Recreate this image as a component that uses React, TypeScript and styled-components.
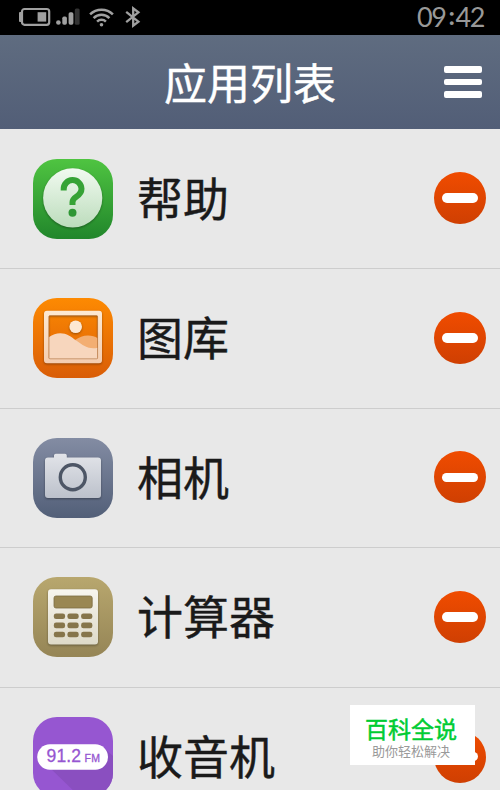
import React from 'react';
import styled, { createGlobalStyle } from 'styled-components';

const HelpIcon = () => (
  <AppIcon viewBox="0 0 80 80">
    <defs>
      <linearGradient id="helpBg" x1="0" y1="0" x2="0" y2="1">
        <stop offset="0" stopColor="#4fc441" />
        <stop offset="1" stopColor="#21862b" />
      </linearGradient>
      <linearGradient id="helpDisc" x1="0" y1="0" x2="0" y2="1">
        <stop offset="0" stopColor="#f1faf0" />
        <stop offset="1" stopColor="#bcdcbc" />
      </linearGradient>
    </defs>
    <rect width="80" height="80" rx="24" fill="url(#helpBg)" />
    <Raised>
      <circle cx="39.7" cy="38.9" r="29.6" fill="url(#helpDisc)" />
    </Raised>
    <path
      d="M30.7 31.6v-1.4a8.9 8.9 0 0 1 17.8-.4c0 4-2.2 6-5.2 7.9-2.8 1.8-3.8 2.8-3.8 5.500v2.900"
      fill="none"
      stroke="#36a336"
      strokeWidth="6"
    />
    <circle cx="39.5" cy="53.7" r="4" fill="#2f9735" />
  </AppIcon>
);

const GalleryIcon = () => (
  <AppIcon viewBox="0 0 80 80">
    <defs>
      <linearGradient id="galleryBg" x1="0" y1="0" x2="0" y2="1">
        <stop offset="0" stopColor="#fd8a02" />
        <stop offset="1" stopColor="#d95d07" />
      </linearGradient>
      <linearGradient id="galleryFrame" x1="0" y1="0" x2="0" y2="1">
        <stop offset="0" stopColor="#fde9d2" />
        <stop offset="1" stopColor="#f4cdb0" />
      </linearGradient>
    </defs>
    <rect width="80" height="80" rx="24" fill="url(#galleryBg)" />
    <Raised>
      <path
        d="M14 12.8h52a3 3 0 0 1 3 3v46.4a3 3 0 0 1-3 3H14a3 3 0 0 1-3-3V15.8a3 3 0 0 1 3-3zM16.7 17.5a1 1 0 0 0-1 1v41.5a1 1 0 0 0 1 1h47a1 1 0 0 0 1-1V18.5a1 1 0 0 0-1-1z"
        fill="url(#galleryFrame)"
        fillRule="evenodd"
      />
    </Raised>
    <Raised>
      <circle cx="42.7" cy="28.7" r="6.3" fill="#fde8d3" />
    </Raised>
    <path
      d="M42 42c4-2.500 8-4.500 13-4.500 4 0 7 1 9.700 2.700V51H50z"
      fill="#f3ae72"
    />
    <path
      d="M15.7 39.2c4-2.800 7.500-4 11.500-4 6.500 0 11 3.500 16 7.300 6 4.500 11 7.700 17 7.700 1.700 0 3-.1 4.500-.5V61h-49z"
      fill="#f7d6bd"
    />
    <rect
      x="16"
      y="17.8"
      width="48.6"
      height="43"
      rx="1"
      fill="none"
      stroke="#a96a37"
      strokeOpacity="0.65"
      strokeWidth="0.9"
    />
  </AppIcon>
);

const CameraIcon = () => (
  <AppIcon viewBox="0 0 80 80">
    <defs>
      <linearGradient id="cameraBg" x1="0" y1="0" x2="0" y2="1">
        <stop offset="0" stopColor="#838ca3" />
        <stop offset="1" stopColor="#525f78" />
      </linearGradient>
      <linearGradient id="cameraBody" x1="0" y1="0" x2="0" y2="1">
        <stop offset="0" stopColor="#e2e4e9" />
        <stop offset="1" stopColor="#bcc1cb" />
      </linearGradient>
    </defs>
    <rect width="80" height="80" rx="24" fill="url(#cameraBg)" />
    <Raised>
      <path
        d="M15 19.5h6v-2a1.800 1.800 0 0 1 1.800-1.800h9.200a1.800 1.800 0 0 1 1.800 1.800v2H65a3 3 0 0 1 3 3v34.500a3 3 0 0 1-3 3H15a3 3 0 0 1-3-3V22.500a3 3 0 0 1 3-3z"
        fill="url(#cameraBody)"
      />
    </Raised>
    <circle
      cx="39.8"
      cy="39.2"
      r="12.5"
      fill="none"
      stroke="#4d5666"
      strokeWidth="3.4"
    />
  </AppIcon>
);

const CalculatorIcon = () => (
  <AppIcon viewBox="0 0 80 80">
    <defs>
      <linearGradient id="calcBg" x1="0" y1="0" x2="0" y2="1">
        <stop offset="0" stopColor="#b8a76e" />
        <stop offset="1" stopColor="#958556" />
      </linearGradient>
      <linearGradient id="calcBody" x1="0" y1="0" x2="0" y2="1">
        <stop offset="0" stopColor="#f7f5ee" />
        <stop offset="1" stopColor="#dedac8" />
      </linearGradient>
    </defs>
    <rect width="80" height="80" rx="24" fill="url(#calcBg)" />
    <Raised>
      <rect x="15" y="12.3" width="50" height="55.2" rx="3" fill="url(#calcBody)" />
    </Raised>
    <rect
      x="21"
      y="19"
      width="38.2"
      height="12"
      rx="2"
      fill="#9a8752"
      stroke="#7c6c41"
      strokeWidth="0.8"
    />
    {[36.4, 45.6, 54.7].map((y) =>
      [20.8, 34.4, 48.1].map((x) => (
        <rect key={`${x}-${y}`} x={x} y={y} width="11.3" height="5.6" rx="2.3" fill="#86754a" />
      )),
    )}
  </AppIcon>
);

const RadioIcon = () => (
  <AppIcon viewBox="0 0 80 80">
    <defs>
      <clipPath id="radioClip">
        <rect width="80" height="80" rx="24" />
      </clipPath>
    </defs>
    <g clipPath="url(#radioClip)">
      <rect width="80" height="80" fill="#9656d1" />
      <path d="M71 31l9 8v41H47L17 51z" fill="#8a4fc0" />
    </g>
    <rect x="4.2" y="27.3" width="70.8" height="25.4" rx="12.7" fill="#fff" />
    <RadioText x="13.5" y="45.2" fontSize="17.5" textLength="34.5">
      91.2
    </RadioText>
    <RadioText x="51.5" y="45.2" fontSize="10.5" textLength="15.5">
      FM
    </RadioText>
  </AppIcon>
);

const apps = [
  { name: '帮助', Icon: HelpIcon },
  { name: '图库', Icon: GalleryIcon },
  { name: '相机', Icon: CameraIcon },
  { name: '计算器', Icon: CalculatorIcon },
  { name: '收音机', Icon: RadioIcon },
];

const StatusIcons = () => (
  <StatusGroup>
    <svg width="32" height="20" viewBox="0 0 32 20">
      <rect x="3" y="2" width="27.2" height="15.8" rx="2.5" fill="none" stroke="#a0a0a0" strokeWidth="2.2" />
      <path d="M2.500 5v10H1a1 1 0 0 1-1-1V6a1 1 0 0 1 1-1z" fill="#a0a0a0" />
      <rect x="18.6" y="5.2" width="8.6" height="9.4" fill="#a0a0a0" />
    </svg>
    <svg width="25" height="18" viewBox="0 0 25 18">
      <circle cx="2.4" cy="14.5" r="2.3" fill="#a0a0a0" />
      <rect x="6.3" y="8.5" width="4.6" height="8.3" rx="1.7" fill="#a0a0a0" />
      <rect x="12.6" y="4.3" width="4.8" height="12.5" rx="1.7" fill="#a0a0a0" />
      <rect x="18.8" y="0.5" width="4.8" height="16.3" rx="1.5" fill="#333333" />
    </svg>
    <svg width="25" height="20" viewBox="0 0 25 20" fill="none" stroke="#a0a0a0" strokeWidth="2.5">
      <path d="M1.100 7.400a16.100 16.100 0 0 1 22.800 0" />
      <path d="M4.600 11.100a11.200 11.200 0 0 1 15.800 0" />
      <path d="M8.100 14.700a6.200 6.200 0 0 1 8.800 0" />
      <circle cx="12.5" cy="17.7" r="1.8" fill="#a0a0a0" stroke="none" />
    </svg>
    <svg width="16" height="22" viewBox="0 0 16 22" fill="none" stroke="#a0a0a0" strokeWidth="2.3">
      <path d="M1.200 5.900l12.200 9.800-5.200 3.900V2.400l5.200 3.900L1.200 16.100" />
    </svg>
  </StatusGroup>
);

const App = () => (
  <>
    <GlobalStyle />
    <Screen>
      <StatusBar>
        <StatusIcons />
        <Clock>
          09<Colon>:</Colon>42
        </Clock>
      </StatusBar>
      <Header>
        <Title>应用列表</Title>
        <MenuButton type="button" aria-label="菜单">
          <MenuLine />
          <MenuLine />
          <MenuLine />
        </MenuButton>
      </Header>
      <AppList>
        {apps.map(({ name, Icon }) => (
          <AppRow key={name}>
            <Icon />
            <AppName>{name}</AppName>
            <RemoveButton type="button" aria-label="删除">
              <Minus />
            </RemoveButton>
          </AppRow>
        ))}
      </AppList>
      <Badge>
        <BadgeTitle>百科全说</BadgeTitle>
        <BadgeText>助你轻松解决</BadgeText>
      </Badge>
    </Screen>
  </>
);

const GlobalStyle = createGlobalStyle`
  * {
    box-sizing: border-box;
  }

  body {
    margin: 0;
    overflow: hidden;
    font-family: 'Noto Sans CJK SC', sans-serif;
  }

  button {
    padding: 0;
    border: none;
  }
`;

const Screen = styled.div`
  position: relative;
  width: 500px;
  height: 790px;
  overflow: hidden;
  background-color: #e8e8e8;
`;

const StatusBar = styled.div`
  display: flex;
  justify-content: space-between;
  height: 35px;
  padding: 0 16px 0 19px;
  background-color: #000000;
`;

const StatusGroup = styled.div`
  display: flex;
  align-items: center;
  gap: 6px;
  height: 34px;

  svg:nth-child(2) {
    margin-left: -1px;
  }

  svg:nth-child(3) {
    margin-left: 2px;
  }

  svg:nth-child(4) {
    margin-left: 5px;
  }
`;

const Clock = styled.div`
  display: flex;
  font-family: Lato, sans-serif;
  font-size: 27px;
  line-height: 33px;
  letter-spacing: -1.4px;
  color: #999999;
`;

const Colon = styled.span`
  margin: 0 2px 0 3px;
  font-size: 25px;
  line-height: 31px;
  font-weight: 700;
`;

const Header = styled.div`
  display: grid;
  grid-template-columns: 1fr auto 1fr;
  align-items: center;
  height: 94px;
  padding: 0 18px;
  background: linear-gradient(#5f6c80, #525e77);
`;

const Title = styled.h1`
  grid-column: 2;
  margin: -3px 0 0;
  font-size: 43px;
  line-height: 60px;
  font-weight: 400;
  color: #ffffff;
  -webkit-text-stroke: 0.4px #ffffff;
`;

const MenuButton = styled.button`
  display: flex;
  flex-direction: column;
  justify-self: end;
  gap: 6px;
  background: none;
`;

const MenuLine = styled.span`
  width: 38px;
  height: 6.4px;
  border-radius: 2px;
  background-color: #ffffff;
`;

const AppList = styled.div`
  display: flex;
  flex-direction: column;
  padding-top: 0.4px;
`;

const AppRow = styled.div`
  display: flex;
  align-items: center;
  flex: none;
  height: 139.6px;
  padding: 0 14px 0 33px;
  border-bottom: 1px solid #cdcdcd;
`;

const AppIcon = styled.svg`
  flex: none;
  width: 80px;
  height: 80px;
`;

const Raised = styled.g`
  filter: drop-shadow(0 1px 1px rgba(0, 0, 0, 0.35));
`;

const RadioText = styled.text`
  font-family: 'Liberation Sans', sans-serif;
  fill: #9656d1;
  stroke: #9656d1;
  stroke-width: 0.3px;
`;

const AppName = styled.div`
  flex: 1;
  margin-left: 24px;
  padding-bottom: 6px;
  font-size: 46px;
  line-height: 64px;
  color: #1a1a1a;
  -webkit-text-stroke: 0.4px #1a1a1a;
`;

const RemoveButton = styled.button`
  display: flex;
  align-items: center;
  justify-content: center;
  width: 52px;
  height: 52px;
  margin-bottom: 1px;
  border-radius: 50%;
  background: linear-gradient(#f04c00, #cf3f02);
`;

const Minus = styled.span`
  width: 36px;
  height: 9.5px;
  border-radius: 5px;
  background-color: #ffffff;
`;

const Badge = styled.div`
  position: absolute;
  top: 705px;
  left: 350px;
  width: 125px;
  height: 60px;
  padding: 12px 3px 0 0;
  background-color: #ffffff;
  font-family: 'Liberation Sans', 'Noto Sans CJK SC', sans-serif;
  text-align: center;
`;

const BadgeTitle = styled.div`
  font-size: 23px;
  line-height: 27px;
  color: #00cc33;
  -webkit-text-stroke: 0.5px #00cc33;
`;

const BadgeText = styled.div`
  font-size: 13px;
  line-height: 16px;
  color: #999999;
`;

export default App;
